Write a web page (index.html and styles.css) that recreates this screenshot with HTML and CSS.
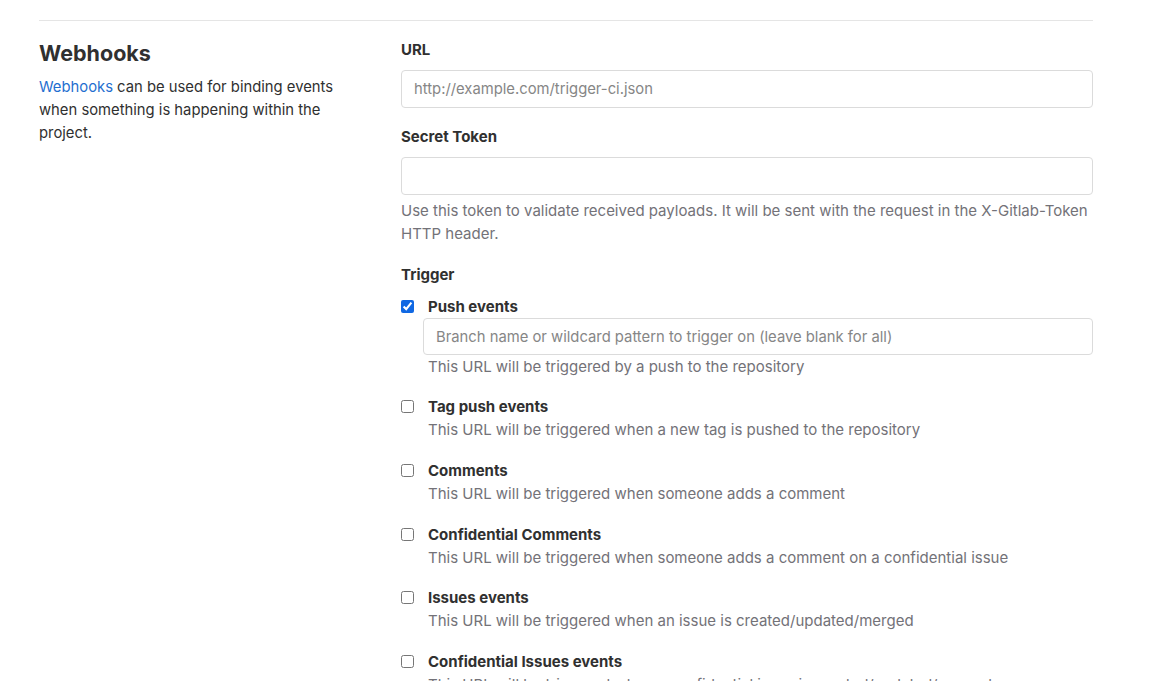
FILE: index.html
```html
<!DOCTYPE html>
<html lang="en">
<head>
<meta charset="utf-8">
<title>Webhooks</title>
<link rel="stylesheet" href="styles.css">
</head>
<body>
<div class="page">
  <hr class="divider">
  <section class="settings">
    <div class="settings-intro">
      <h4 class="settings-title">Webhooks</h4>
      <p class="settings-desc"><a href="#" class="link">Webhooks</a> can be used for binding events when something is happening within the project.</p>
    </div>
    <form class="settings-form">
      <div class="form-group">
        <label class="label" for="url">URL</label>
        <input class="input" id="url" type="text" placeholder="http://example.com/trigger-ci.json">
      </div>
      <div class="form-group">
        <label class="label" for="token">Secret Token</label>
        <input class="input" id="token" type="text">
        <p class="help">Use this token to validate received payloads. It will be sent with the request in the X-Gitlab-Token HTTP header.</p>
      </div>
      <div class="form-group trigger">
        <div class="label">Trigger</div>
        <div class="check-list">
          <div class="check">
            <div class="check-row">
              <input class="checkbox" type="checkbox" id="push" checked>
              <label class="check-label" for="push">Push events</label>
            </div>
            <input class="input branch" type="text" placeholder="Branch name or wildcard pattern to trigger on (leave blank for all)">
            <p class="check-help">This URL will be triggered by a push to the repository</p>
          </div>
          <div class="check">
            <div class="check-row">
              <input class="checkbox" type="checkbox" id="tag">
              <label class="check-label" for="tag">Tag push events</label>
            </div>
            <p class="check-help">This URL will be triggered when a new tag is pushed to the repository</p>
          </div>
          <div class="check">
            <div class="check-row">
              <input class="checkbox" type="checkbox" id="comments">
              <label class="check-label" for="comments">Comments</label>
            </div>
            <p class="check-help">This URL will be triggered when someone adds a comment</p>
          </div>
          <div class="check">
            <div class="check-row">
              <input class="checkbox" type="checkbox" id="conf-comments">
              <label class="check-label" for="conf-comments">Confidential Comments</label>
            </div>
            <p class="check-help">This URL will be triggered when someone adds a comment on a confidential issue</p>
          </div>
          <div class="check">
            <div class="check-row">
              <input class="checkbox" type="checkbox" id="issues">
              <label class="check-label" for="issues">Issues events</label>
            </div>
            <p class="check-help">This URL will be triggered when an issue is created/updated/merged</p>
          </div>
          <div class="check">
            <div class="check-row">
              <input class="checkbox" type="checkbox" id="conf-issues">
              <label class="check-label" for="conf-issues">Confidential Issues events</label>
            </div>
            <p class="check-help">This URL will be triggered when a confidential issue is created/updated/merged</p>
          </div>
        </div>
      </div>
    </form>
  </section>
</div>
</body>
</html>
```

FILE: styles.css
```css
* { box-sizing: border-box; }

html, body {
  margin: 0;
  background: #ffffff;
}

body {
  font-family: Inter, "Noto Sans", "Liberation Sans", sans-serif;
  font-size: 15px;
  line-height: 23px;
  color: #303030;
  overflow: hidden;
  height: 681px;
}

.page {
  padding: 20px 81px 0 39px;
}

.divider {
  margin: 0;
  border: 0;
  border-top: 1px solid #e5e5e5;
}

.settings {
  display: grid;
  grid-template-columns: 332px 1fr;
  column-gap: 30px;
  padding-top: 17px;
}

.settings-title {
  margin: 0 0 8px;
  font-size: 21.5px;
  line-height: 30px;
  font-weight: 700;
  color: #303030;
}

.settings-desc {
  margin: 0;
  font-size: 14.8px;
}

.link {
  color: #1f6fd0;
  text-decoration: none;
}

.settings-form {
  display: flex;
  flex-direction: column;
}

.form-group {
  display: flex;
  flex-direction: column;
  margin-bottom: 17px;
}

.form-group.token-group {
  margin-bottom: 18px;
}

.label {
  font-weight: 700;
  margin-bottom: 9px;
}

.input {
  height: 38px;
  border: 1px solid #dbdbdb;
  border-radius: 4px;
  padding: 0 12px;
  font: inherit;
  font-size: 14.8px;
  color: #303030;
  background: #fff;
  outline: none;
}

.input::placeholder {
  color: #868686;
}

.help {
  margin: 4px 0 0;
  color: #737278;
}

.trigger {
  margin-top: 1px;
}

.trigger .label {
  margin-bottom: 9px;
}

.check-list {
  display: flex;
  flex-direction: column;
}

.check {
  display: flex;
  flex-direction: column;
  margin-bottom: 17.75px;
}

.check:first-child {
  margin-bottom: 17px;
}

.check-row {
  display: flex;
  align-items: center;
  gap: 14px;
}

.checkbox {
  width: 13px;
  height: 13px;
  margin: 0;
  accent-color: #1068e3;
}

.check-label {
  font-weight: 700;
}

.branch {
  margin-left: 22px;
  height: 37px;
}

.check-help {
  margin: 0 0 0 27px;
  color: #737278;
}
```
